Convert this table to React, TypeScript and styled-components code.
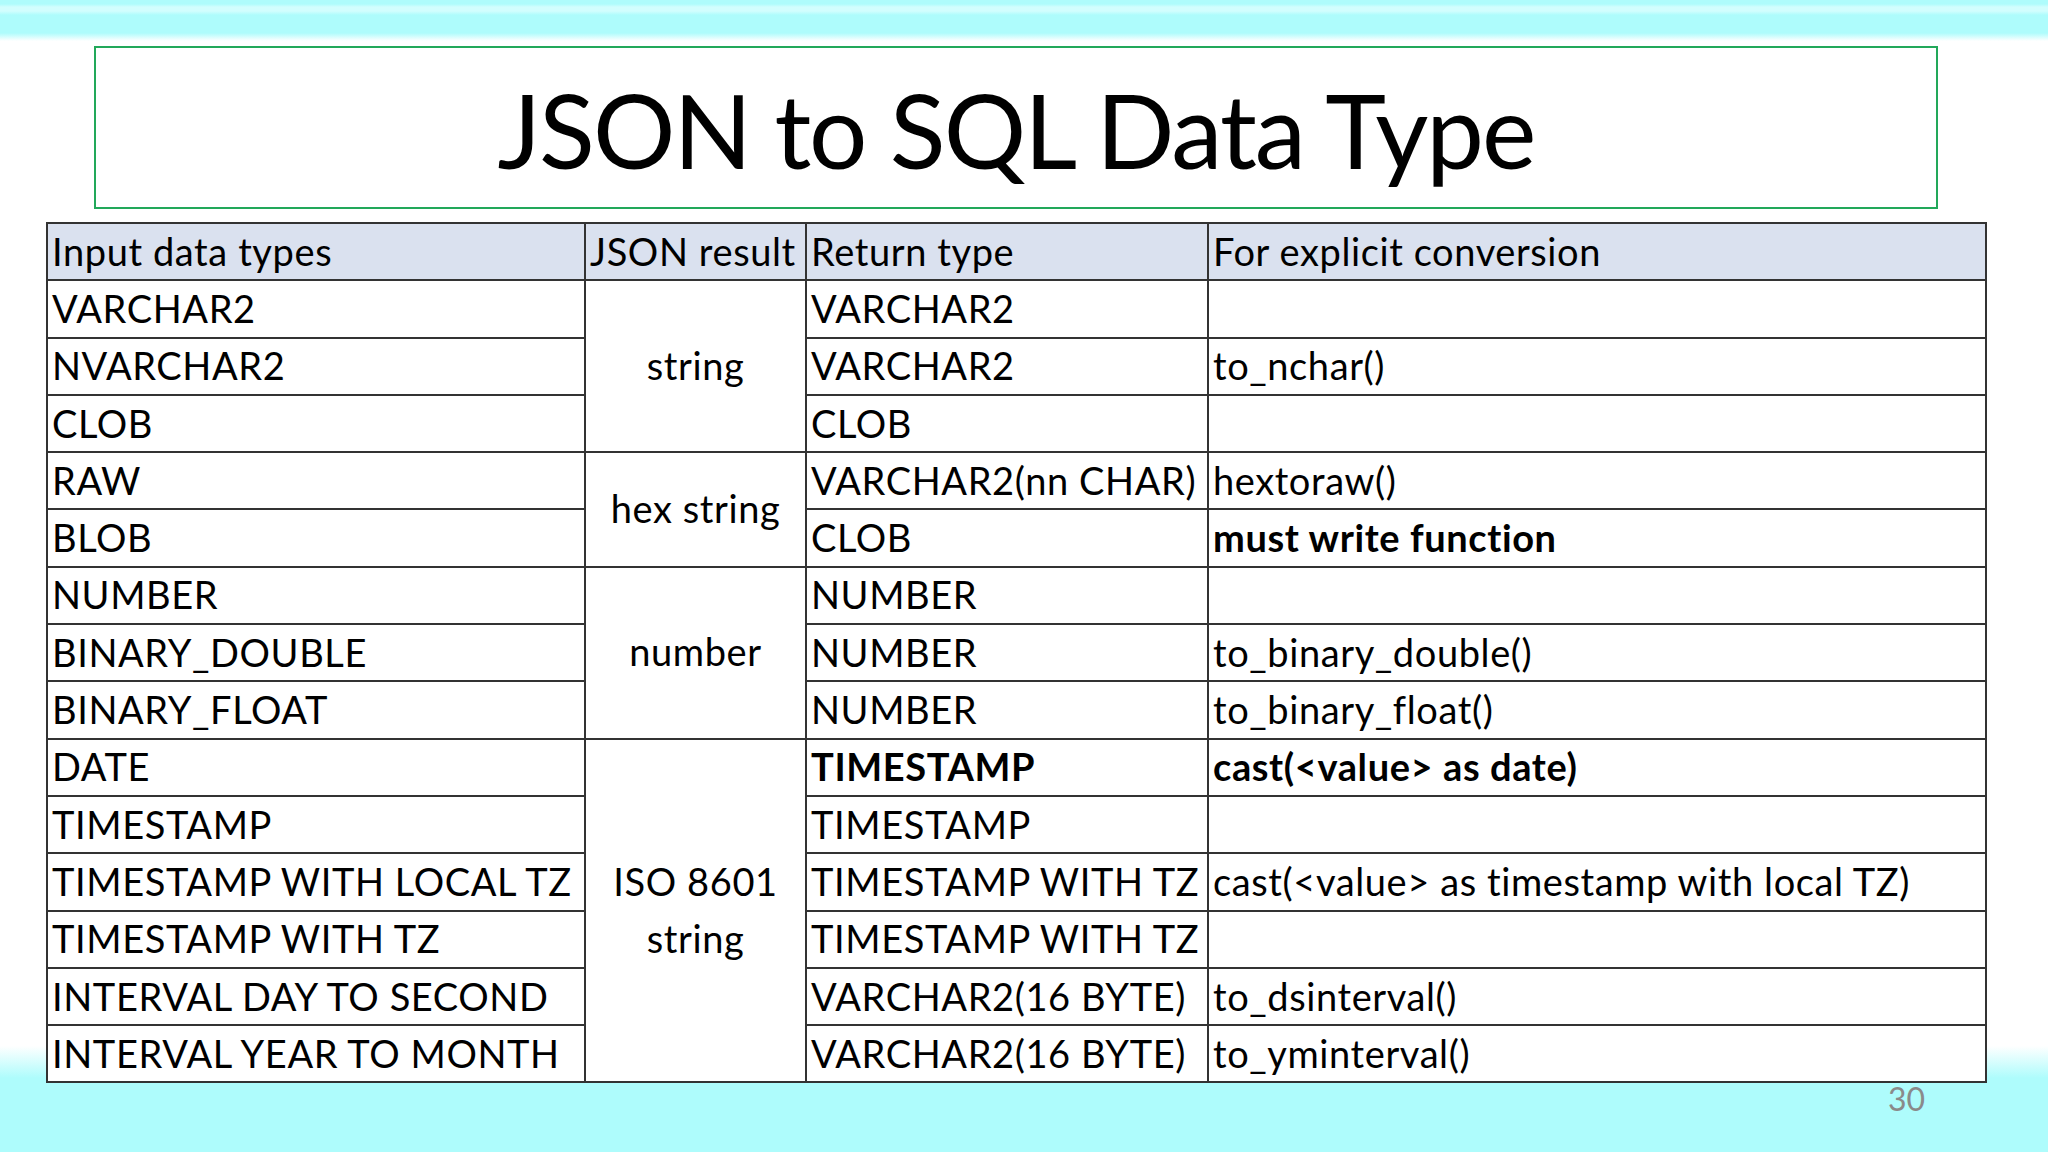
import React from "react";
import styled, { createGlobalStyle } from "styled-components";

const Global = createGlobalStyle`
  html, body { margin: 0; padding: 0; }
  body { font-family: Lato, "Open Sans", "Liberation Sans", sans-serif; color: #000; }
`;

const Page = styled.div`
  width: 2048px;
  height: 1152px;
  display: flex;
  flex-direction: column;
  background: linear-gradient(
    to bottom,
    #ffffff 0,
    #ffffff 1046px,
    #aefcfc 1078px,
    #aefcfc 100%
  );
  overflow: hidden;
`;

const TopBand = styled.div`
  height: 42px;
  flex: none;
  background: linear-gradient(
    to bottom,
    #aefcfc 0,
    #aefcfc 4px,
    #d2fefe 7px,
    #d2fefe 11px,
    #aefcfc 15px,
    #aefcfc 33px,
    #ffffff 41px
  );
`;

const TitleBox = styled.div`
  margin: 4px 0 0 94px;
  width: 1844px;
  height: 163px;
  box-sizing: border-box;
  border: 2px solid #22a85a;
  display: flex;
  align-items: center;
  justify-content: center;
`;

const Title = styled.h1`
  margin: 4px 0 0 0;
  font-family: Lato, "Open Sans", sans-serif;
  font-weight: 400;
  font-size: 103px;
  line-height: 1;
  letter-spacing: -2px;
`;

const Table = styled.table`
  margin: 13px 0 0 46px;
  width: 1939px;
  border-collapse: collapse;
  table-layout: fixed;
  font-size: 38px;
  letter-spacing: 0.6px;
`;

const Row = styled.tr`
  height: 57.3px;
`;

const HeadCell = styled.th`
  background: #dae1ef;
  border: 2px solid #333;
  font-weight: 400;
  text-align: left;
  padding: 0 4px 2px 4px;
  white-space: nowrap;
  overflow: visible;
  line-height: 1;
`;

const Cell = styled.td<{ $bold?: boolean; $center?: boolean }>`
  border: 2px solid #333;
  padding: 0 4px 2px 4px;
  white-space: nowrap;
  font-weight: ${(p) => (p.$bold ? 700 : 400)};
  text-align: ${(p) => (p.$center ? "center" : "left")};
  line-height: ${(p) => (p.$center ? "57px" : "1")};
  background: #fff;
`;

const Footer = styled.div`
  display: flex;
  justify-content: flex-end;
  width: 1925px;
  margin-top: -4px;
`;

const PageNum = styled.span`
  font-family: Lato, "Open Sans", sans-serif;
  font-size: 32px;
  color: #8a8a8a;
`;

type R = {
  input: string;
  group?: { text: React.ReactNode; span: number };
  ret: string;
  conv?: string;
  boldRet?: boolean;
  boldConv?: boolean;
};

const rows: R[] = [
  { input: "VARCHAR2", group: { text: "string", span: 3 }, ret: "VARCHAR2" },
  { input: "NVARCHAR2", ret: "VARCHAR2", conv: "to_nchar()" },
  { input: "CLOB", ret: "CLOB" },
  { input: "RAW", group: { text: "hex string", span: 2 }, ret: "VARCHAR2(nn CHAR)", conv: "hextoraw()" },
  { input: "BLOB", ret: "CLOB", conv: "must write function", boldConv: true },
  { input: "NUMBER", group: { text: "number", span: 3 }, ret: "NUMBER" },
  { input: "BINARY_DOUBLE", ret: "NUMBER", conv: "to_binary_double()" },
  { input: "BINARY_FLOAT", ret: "NUMBER", conv: "to_binary_float()" },
  {
    input: "DATE",
    group: { text: (<>ISO 8601<br />string</>), span: 6 },
    ret: "TIMESTAMP",
    boldRet: true,
    conv: "cast(<value> as date)",
    boldConv: true,
  },
  { input: "TIMESTAMP", ret: "TIMESTAMP" },
  { input: "TIMESTAMP WITH LOCAL TZ", ret: "TIMESTAMP WITH TZ", conv: "cast(<value> as timestamp with local TZ)" },
  { input: "TIMESTAMP WITH TZ", ret: "TIMESTAMP WITH TZ" },
  { input: "INTERVAL DAY TO SECOND", ret: "VARCHAR2(16 BYTE)", conv: "to_dsinterval()" },
  { input: "INTERVAL YEAR TO MONTH", ret: "VARCHAR2(16 BYTE)", conv: "to_yminterval()" },
];

export default function App() {
  return (
    <Page>
      <Global />
      <TopBand />
      <TitleBox>
        <Title>JSON to SQL Data Type</Title>
      </TitleBox>
      <Table>
        <colgroup>
          <col style={{ width: 538 }} />
          <col style={{ width: 221 }} />
          <col style={{ width: 402 }} />
          <col style={{ width: 778 }} />
        </colgroup>
        <thead>
          <Row>
            <HeadCell>Input data types</HeadCell>
            <HeadCell>JSON result</HeadCell>
            <HeadCell>Return type</HeadCell>
            <HeadCell>For explicit conversion</HeadCell>
          </Row>
        </thead>
        <tbody>
          {rows.map((r, i) => (
            <Row key={i}>
              <Cell>{r.input}</Cell>
              {r.group && (
                <Cell $center rowSpan={r.group.span}>
                  {r.group.text}
                </Cell>
              )}
              <Cell $bold={r.boldRet}>{r.ret}</Cell>
              <Cell $bold={r.boldConv}>{r.conv ?? ""}</Cell>
            </Row>
          ))}
        </tbody>
      </Table>
      <Footer>
        <PageNum>30</PageNum>
      </Footer>
    </Page>
  );
}
